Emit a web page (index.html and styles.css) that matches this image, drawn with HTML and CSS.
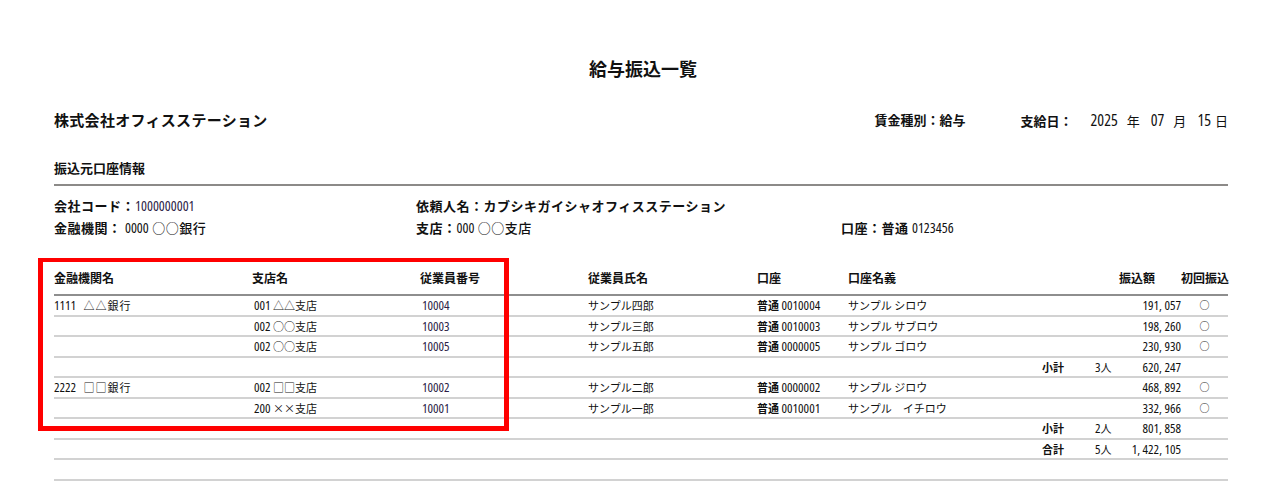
FILE: index.html
```html
<!DOCTYPE html>
<html lang="ja">
<head>
<meta charset="utf-8">
<title>給与振込一覧</title>
<link rel="stylesheet" href="styles.css">
</head>
<body>
<div class="page">
  <h1 class="title">給与振込一覧</h1>

  <div class="meta">
    <div class="company">株式会社オフィスステーション</div>
    <div class="meta-right">
      <span class="wage">賃金種別：給与</span>
      <span class="payday"><b class="pay-lbl">支給日：</b><span class="date"><span class="n">2025</span><span class="u">年</span><span class="n">07</span><span class="u">月</span><span class="n">15</span><span class="u last">日</span></span></span>
    </div>
  </div>

  <div class="section-title">振込元口座情報</div>
  <div class="info">
    <div class="info-cell"><b>会社コード：</b><span class="n navy">1000000001</span></div>
    <div class="info-cell"><b>依頼人名：カブシキガイシャオフィスステーション</b></div>
    <div class="info-cell"></div>
    <div class="info-cell"><b>金融機関：</b> <span class="n">0000</span> ○○銀行</div>
    <div class="info-cell"><b>支店：</b><span class="n">000</span> ○○支店</div>
    <div class="info-cell"><b>口座：普通</b> <span class="n">0123456</span></div>
  </div>

  <div class="table">
    <div class="row head">
      <div>金融機関名</div>
      <div>支店名</div>
      <div>従業員番号</div>
      <div>従業員氏名</div>
      <div>口座</div>
      <div>口座名義</div>
      <div></div>
      <div></div>
      <div class="r amt-head">振込額</div>
      <div class="r">初回振込</div>
    </div>

    <div class="row">
      <div><span class="n">1111</span> <span class="bank">△△銀行</span></div>
      <div class="br"><span class="n">001</span> △△支店</div>
      <div class="n navy id">10004</div>
      <div class="nm">サンプル四郎</div>
      <div class="acct">普通 <span class="n">0010004</span></div>
      <div>サンプル シロウ</div>
      <div></div><div></div>
      <div class="r n">191, 057</div>
      <div class="c">○</div>
    </div>
    <div class="row">
      <div></div>
      <div class="br"><span class="n">002</span> ○○支店</div>
      <div class="n navy id">10003</div>
      <div class="nm">サンプル三郎</div>
      <div class="acct">普通 <span class="n">0010003</span></div>
      <div>サンプル サブロウ</div>
      <div></div><div></div>
      <div class="r n">198, 260</div>
      <div class="c">○</div>
    </div>
    <div class="row">
      <div></div>
      <div class="br"><span class="n">002</span> ○○支店</div>
      <div class="n navy id">10005</div>
      <div class="nm">サンプル五郎</div>
      <div class="acct">普通 <span class="n">0000005</span></div>
      <div>サンプル ゴロウ</div>
      <div></div><div></div>
      <div class="r n">230, 930</div>
      <div class="c">○</div>
    </div>
    <div class="row">
      <div></div><div></div><div></div><div></div><div></div><div></div>
      <div class="sum">小計</div>
      <div class="cnt"><span class="n">3</span>人</div>
      <div class="r n">620, 247</div>
      <div></div>
    </div>

    <div class="row">
      <div><span class="n">2222</span> <span class="bank">□□銀行</span></div>
      <div class="br"><span class="n">002</span> □□支店</div>
      <div class="n navy id">10002</div>
      <div class="nm">サンプル二郎</div>
      <div class="acct">普通 <span class="n">0000002</span></div>
      <div>サンプル ジロウ</div>
      <div></div><div></div>
      <div class="r n">468, 892</div>
      <div class="c">○</div>
    </div>
    <div class="row">
      <div></div>
      <div class="br"><span class="n">200</span> ××支店</div>
      <div class="n navy id">10001</div>
      <div class="nm">サンプル一郎</div>
      <div class="acct">普通 <span class="n">0010001</span></div>
      <div>サンプル　イチロウ</div>
      <div></div><div></div>
      <div class="r n">332, 966</div>
      <div class="c">○</div>
    </div>
    <div class="row">
      <div></div><div></div><div></div><div></div><div></div><div></div>
      <div class="sum">小計</div>
      <div class="cnt"><span class="n">2</span>人</div>
      <div class="r n">801, 858</div>
      <div></div>
    </div>
    <div class="row">
      <div></div><div></div><div></div><div></div><div></div><div></div>
      <div class="sum">合計</div>
      <div class="cnt"><span class="n">5</span>人</div>
      <div class="r n">1, 422, 105</div>
      <div></div>
    </div>
    <div class="row">
      <div></div><div></div><div></div><div></div><div></div><div></div><div></div><div></div><div></div><div></div>
    </div>

    <div class="highlight" aria-hidden="true"></div>
  </div>
</div>
</body>
</html>
```

FILE: styles.css
```css
* { box-sizing: border-box; }

html, body {
  margin: 0;
  padding: 0;
  background: #ffffff;
}

body {
  font-family: "Noto Sans CJK JP", "Noto Sans", sans-serif;
  color: #111111;
  overflow: hidden;
}

.page {
  width: 1280px;
  padding: 56px 52px 0 54px;
}

.n {
  font-family: "Open Sans", "Liberation Sans", "Noto Sans CJK JP", sans-serif;
  font-stretch: 75%;
}

.navy { color: #2b1d46; }

.title {
  margin: 0;
  font-size: 18px;
  line-height: 24px;
  font-weight: 700;
  text-align: center;
  padding-left: 4px;
}

.meta {
  display: flex;
  justify-content: space-between;
  align-items: center;
  margin-top: 30px;
  height: 20px;
}

.company {
  font-size: 15px;
  font-weight: 700;
  line-height: 20px;
  letter-spacing: 0.3px;
}

.meta-right {
  display: flex;
  align-items: center;
  font-size: 13px;
  line-height: 20px;
}

.wage {
  font-weight: 700;
  margin-right: 55px;
}

.pay-lbl {
  font-weight: 700;
  margin-right: 18px;
}

.date { font-weight: 400; }
.date .n { font-size: 16px; }
.date .u { margin: 0 11px 0 9px; }
.date .u.last { margin: 0 0 0 4px; }

.section-title {
  margin-top: 28px;
  font-size: 13px;
  font-weight: 700;
  line-height: 20px;
  padding-bottom: 6px;
  border-bottom: 2px solid #8c8a88;
}

.info {
  display: grid;
  grid-template-columns: 362px 425px 1fr;
  grid-auto-rows: 22px;
  margin-top: 9px;
  font-size: 13px;
  line-height: 22px;
  letter-spacing: 0.5px;
  font-weight: 500;
}

.info-cell b { font-weight: 600; }
.info-cell .n { font-size: 14px; letter-spacing: 0; }

.table {
  position: relative;
  margin-top: 29px;
}

.row {
  display: grid;
  grid-template-columns: 198px 168px 168px 169px 91px 192px 55px 24px 62px 47px;
  height: 20.5px;
  border-bottom: 2px solid #d2d2d2;
  font-size: 11px;
  line-height: 18.5px;
  white-space: nowrap;
}

.row.head {
  height: 28px;
  line-height: 20px;
  font-size: 12px;
  font-weight: 700;
  border-bottom: 2px solid #8e8e8e;
}

.row .n { font-size: 13px; }
.bank { margin-left: 5px; letter-spacing: 1px; }
.row .id { padding-left: 2px; }
.br { padding-left: 2px; }
.acct { font-weight: 600; }
.acct .n { font-weight: 400; }
.r { text-align: right; }
.amt-head { padding-right: 26px; }
.c { text-align: center; font-size: 10px; }
.sum { font-weight: 600; padding-left: 2px; }
.cnt { white-space: nowrap; }

.highlight {
  position: absolute;
  left: -16px;
  top: -10px;
  width: 471px;
  height: 173px;
  border: 5px solid #ff0000;
  border-top-width: 4px;
  pointer-events: none;
}
```
